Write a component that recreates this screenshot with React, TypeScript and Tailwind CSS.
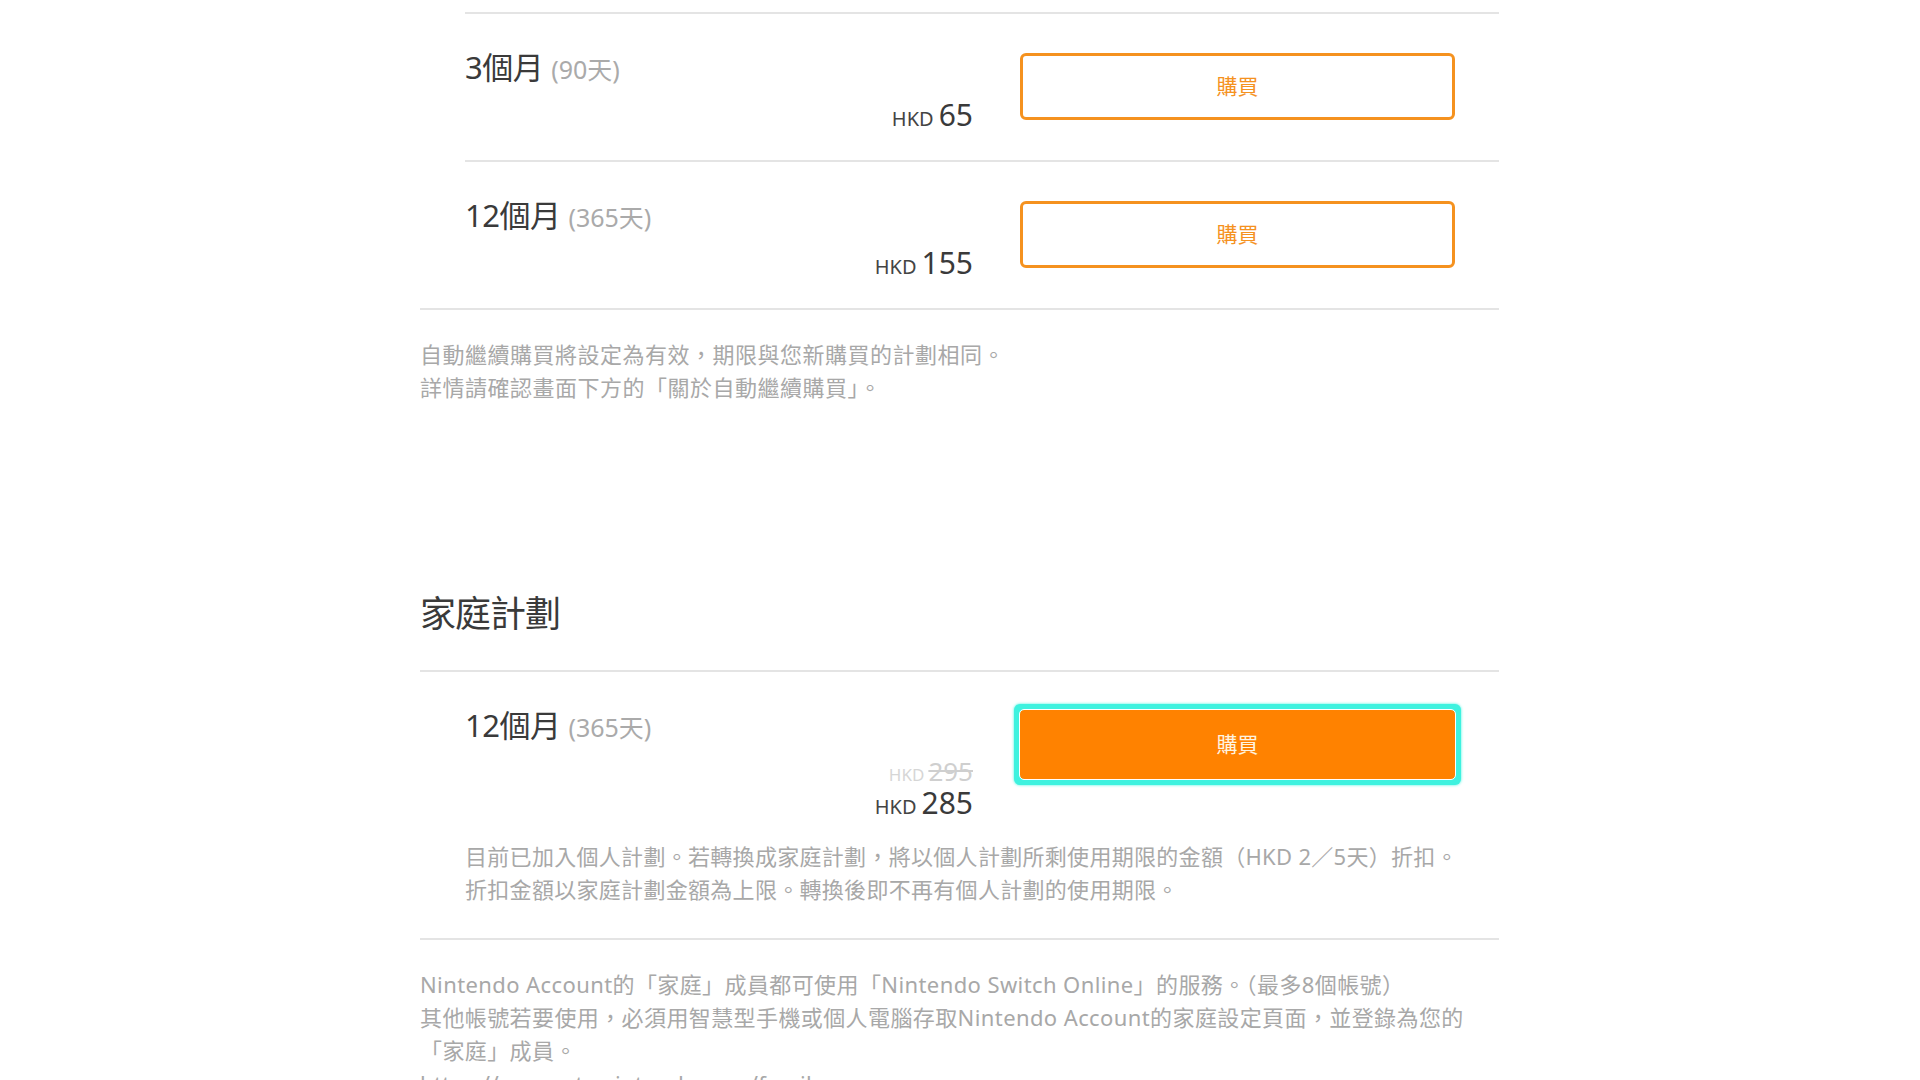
import React from "react";

const font = {
  fontFamily: '"Noto Sans", "Noto Sans CJK TC", sans-serif',
};

function OutlineButton() {
  return (
    <button className="w-[435px] h-[67px] shrink-0 rounded-[6px] border-[3px] border-[#f5921f] bg-white text-[21px] text-[#f5921f] flex items-center justify-center">
      購買
    </button>
  );
}

function FocusButton() {
  return (
    <div className="shrink-0 rounded-[6px] bg-[#3ef2df] p-[6px] -m-[6px] shadow-[0_0_3px_#3ef2df]">
      <button className="w-[435px] h-[69px] rounded-[4px] bg-[#ff8200] outline outline-1 outline-white text-[21px] text-[#fff4e0] flex items-center justify-center">
        購買
      </button>
    </div>
  );
}

function Title({ months, days }: { months: string; days: string }) {
  return (
    <div className="flex items-baseline h-[36px]">
      <span className="text-[31px] leading-[36px] text-[#3a3a3a] tracking-[-0.5px]">{months}</span>
      <span className="ml-[8px] text-[25px] leading-[36px] text-[#aaaaaa]">{days}</span>
    </div>
  );
}

function Price({ value }: { value: string }) {
  return (
    <div className="flex items-baseline justify-end h-[36px]">
      <span className="text-[20px] leading-[36px] text-[#444]">HKD</span>
      <span className="ml-[5px] text-[30px] leading-[36px] text-[#3a3a3a]">{value}</span>
    </div>
  );
}

function PlanRow({ months, days, price, last }: { months: string; days: string; price: string; last?: boolean }) {
  return (
    <div className={"flex pt-[35px] pb-[27px] pr-[44px]" + (last ? "" : " border-b-2 border-[#e4e4e4]")}>
      <div className="flex-1">
        <Title months={months} days={days} />
        <div className="mt-[12px]">
          <Price value={price} />
        </div>
      </div>
      <div className="ml-[47px] pt-[4px]">
        <OutlineButton />
      </div>
    </div>
  );
}

export default function App() {
  return (
    <div className="w-[1920px] h-[1080px] overflow-hidden bg-white" style={font}>
      <div className="w-[1079px] ml-[420px] pt-[12px]">
        {/* individual plans */}
        <div className="ml-[45px] border-t-2 border-[#e4e4e4]">
          <PlanRow months="3個月" days="(90天)" price="65" />
          <PlanRow months="12個月" days="(365天)" price="155" last />
        </div>
        <div className="border-t-2 border-[#e4e4e4] pt-[28px] text-[22px] leading-[33px] text-[#a8a8a8] tracking-[0.5px]">
          <p>自動繼續購買將設定為有效，期限與您新購買的計劃相同。</p>
          <p>詳情請確認畫面下方的「關於自動繼續購買」。</p>
        </div>

        {/* family plan */}
        <h2 className="mt-[188px] text-[36px] leading-[44px] text-[#3a3a3a] tracking-[-1px]">家庭計劃</h2>
        <div className="mt-[34px] border-t-2 border-[#e4e4e4]">
          <div className="ml-[45px] pr-[44px] pt-[35px] flex">
            <div className="flex-1">
              <Title months="12個月" days="(365天)" />
              <div className="mt-[14px] flex items-baseline justify-end h-[28px]">
                <span className="text-[17px] leading-[28px] text-[#d6d6d6]">HKD</span>
                <span className="ml-[4px] text-[26px] leading-[28px] text-[#cfcfcf] line-through">295</span>
              </div>
              <div className="mt-[0px]">
                <Price value="285" />
              </div>
            </div>
            <div className="ml-[47px] pt-[3px]">
              <FocusButton />
            </div>
          </div>
          <div className="ml-[45px] mt-[19px] pb-[32px] text-[22px] leading-[33px] text-[#a8a8a8] tracking-[0.3px] border-b-2 border-[#e4e4e4]">
            <p>目前已加入個人計劃。若轉換成家庭計劃，將以個人計劃所剩使用期限的金額（HKD 2／5天）折扣。</p>
            <p>折扣金額以家庭計劃金額為上限。轉換後即不再有個人計劃的使用期限。</p>
          </div>
        </div>
        <div className="border-t-2 border-[#e4e4e4] -mt-[2px] pt-[28px] text-[22px] leading-[33px] text-[#a8a8a8] tracking-[0.4px]">
          <p>Nintendo Account的「家庭」成員都可使用「Nintendo Switch Online」的服務。（最多8個帳號）</p>
          <p>其他帳號若要使用，必須用智慧型手機或個人電腦存取Nintendo Account的家庭設定頁面，並登錄為您的「家庭」成員。</p>
          <p>https://accounts.nintendo.com/family</p>
        </div>
      </div>
    </div>
  );
}
